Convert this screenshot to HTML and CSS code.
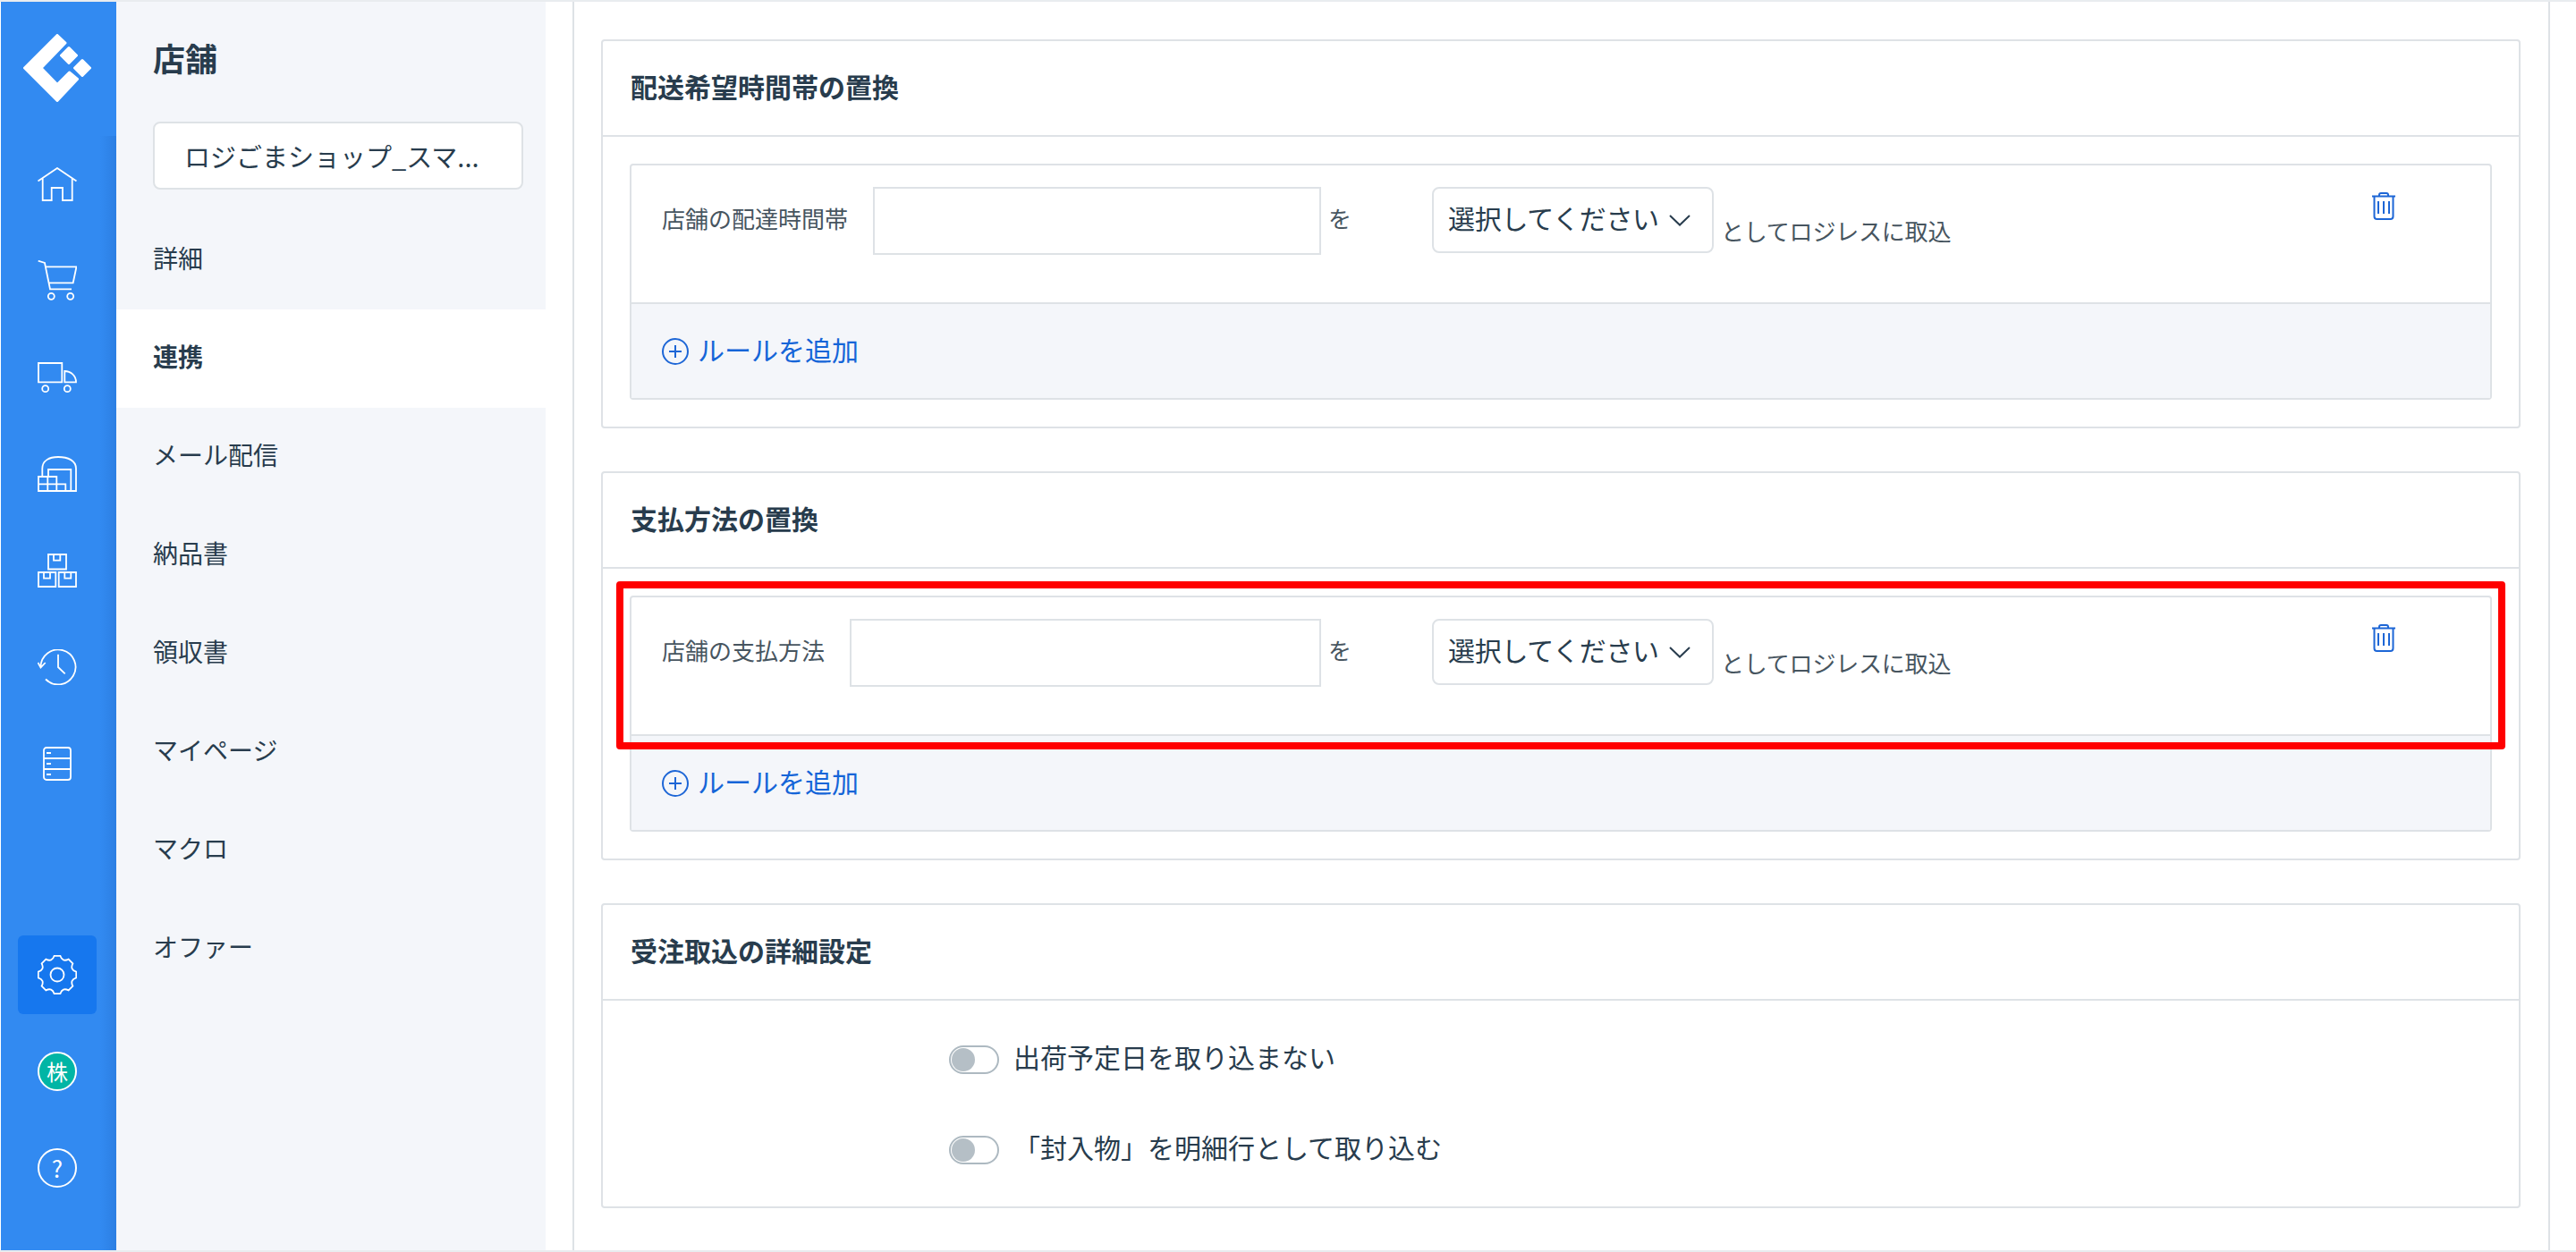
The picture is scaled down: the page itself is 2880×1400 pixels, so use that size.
FILE: index.html
```html
<!DOCTYPE html>
<html lang="ja">
<head>
<meta charset="utf-8">
<title>店舗 連携</title>
<link rel="stylesheet" href="styles.css">
</head>
<body>
<div class="app">
  <aside class="rail">
    <div class="rail-logo">
      <svg class="logo" width="76" height="76" viewBox="0 0 76 76"><path d="M38 1.500L47 10L20 38L38 56.500L51.500 43L60.500 50.500L38 74.500L1.500 38Z"/><path d="M51 15.500L59.500 24L51 32.500L42.500 24ZM66 29.500L74.500 38L66 46.500L57.500 38Z"/></svg>
    </div>
    <nav class="rail-nav">
      <a class="rail-item"><svg class="ico" width="44" height="38" viewBox="0 0 44 38"><path d="M.5 15.500L22 1L43.500 15.500M5.700 11.500V37H15.700V23H28V37H38.700V11.500"/></svg></a>
      <a class="rail-item"><svg class="ico" width="44" height="46" viewBox="0 0 44 46"><path d="M.7 .7L8 3L14 32.300H38M8.700 7.300H43.500L39.700 25.300H12.700"/><circle cx="15.300" cy="40.300" r="3.500"/><circle cx="36.700" cy="40.300" r="3.500"/></svg></a>
      <a class="rail-item"><svg class="ico" width="44" height="35" viewBox="0 0 44 35"><path d="M1 1H27.300V22.300H1ZM30.300 10C37 10 43 15 43 22.300H30.300Z"/><circle cx="8.700" cy="29.700" r="3.500"/><circle cx="33.300" cy="29.700" r="3.500"/></svg></a>
      <a class="rail-item"><svg class="ico" width="44" height="40" viewBox="0 0 44 40"><path d="M5.300 23V14C5.300 5 13 1 23 1C34 1 43 5 43 14V39H1V23H21.300V31.300H31.300V39M1 31.300H21.300V39M11.300 23V39M12 23V15H37.300V39"/></svg></a>
      <a class="rail-item"><svg class="ico" width="44" height="38" viewBox="0 0 44 38"><path d="M12 1H32V17.500H12ZM18 1V7.700H25.300V1M1 21H20.300V37H1ZM7 21V27.700H14V21M23.700 21H43V37H23.700ZM30.300 21V27.700H37.300V21"/></svg></a>
      <a class="rail-item"><svg class="ico" width="44" height="40" viewBox="0 0 44 40"><path d="M3.500 20A19.500 19.500 0 1 1 9 33.500M.5 15L3.500 20.500L8.700 15M23 5.700V20L30.700 27.300"/></svg></a>
      <a class="rail-item"><svg class="ico" width="32" height="38" viewBox="0 0 32 38"><rect x="1" y="1" width="30" height="36" rx="3"/><path d="M1 13H31M1 25H31M4 7H9M4 19H9M4 31H9"/></svg></a>
      <div class="rail-bottom">
        <a class="rail-item"><span class="rail-active"><svg class="ico" width="44" height="44" viewBox="0 0 44 44"><path d="M18.640 .76L25.360 .76Q27.740 8.140 34.640 4.610L39.390 9.360Q35.860 16.260 43.240 18.640L43.240 25.360Q35.860 27.740 39.390 34.640L34.640 39.390Q27.740 35.860 25.360 43.240L18.640 43.240Q16.260 35.860 9.360 39.390L4.610 34.640Q8.140 27.740 .76 25.360L.76 18.640Q8.140 16.260 4.610 9.360L9.360 4.610Q16.260 8.140 18.640 .76Z"/><circle cx="22" cy="22" r="7.500"/></svg></span></a>
        <a class="rail-item"><span class="avatar">株</span></a>
        <a class="rail-item"><span class="help">?</span></a>
      </div>
    </nav>
  </aside>

  <aside class="panel">
    <h1 class="panel-title">店舗</h1>
    <div class="store-select">ロジごまショップ_スマ...</div>
    <ul class="panel-nav">
      <li class="panel-item">詳細</li>
      <li class="panel-item panel-item-active">連携</li>
      <li class="panel-item">メール配信</li>
      <li class="panel-item">納品書</li>
      <li class="panel-item">領収書</li>
      <li class="panel-item">マイページ</li>
      <li class="panel-item">マクロ</li>
      <li class="panel-item">オファー</li>
    </ul>
  </aside>

  <main class="main">
    <div class="content">
      <section class="card">
        <h2 class="card-head">配送希望時間帯の置換</h2>
        <div class="card-body">
          <div class="rules">
            <div class="rule-row">
              <div class="rule-field"><label class="rule-label">店舗の配達時間帯</label><input class="rule-input" type="text"></div>
              <span class="rule-wo">を</span>
              <div class="pick">選択してください<svg class="pick-arrow" width="24" height="13" viewBox="0 0 24 13"><path d="M1 1L12 11.500L23 1"/></svg></div>
              <span class="rule-tail">としてロジレスに取込</span>
              <svg class="trash" width="26" height="31" viewBox="0 0 26 31"><path d="M0 4.500H26M8 4V3Q8 1 10 1H16Q18 1 18 3V4M2.500 5V27Q2.500 30 5.500 30H20.500Q23.500 30 23.500 27V5M7 10V24M13 10V24M19 10V24"/></svg>
            </div>
            <div class="rule-foot">
              <svg class="add-ico" width="30" height="30" viewBox="0 0 30 30"><circle cx="15" cy="15" r="14"/><path d="M15 8V22M8 15H22"/></svg>
              <span class="add-text">ルールを追加</span>
            </div>
          </div>
        </div>
      </section>

      <section class="card">
        <h2 class="card-head">支払方法の置換</h2>
        <div class="card-body">
          <div class="rules">
            <div class="rule-row">
              <div class="rule-field"><label class="rule-label">店舗の支払方法</label><input class="rule-input" type="text"></div>
              <span class="rule-wo">を</span>
              <div class="pick">選択してください<svg class="pick-arrow" width="24" height="13" viewBox="0 0 24 13"><path d="M1 1L12 11.500L23 1"/></svg></div>
              <span class="rule-tail">としてロジレスに取込</span>
              <svg class="trash" width="26" height="31" viewBox="0 0 26 31"><path d="M0 4.500H26M8 4V3Q8 1 10 1H16Q18 1 18 3V4M2.500 5V27Q2.500 30 5.500 30H20.500Q23.500 30 23.500 27V5M7 10V24M13 10V24M19 10V24"/></svg>
              <div class="highlight"></div>
            </div>
            <div class="rule-foot">
              <svg class="add-ico" width="30" height="30" viewBox="0 0 30 30"><circle cx="15" cy="15" r="14"/><path d="M15 8V22M8 15H22"/></svg>
              <span class="add-text">ルールを追加</span>
            </div>
          </div>
        </div>
      </section>

      <section class="card">
        <h2 class="card-head">受注取込の詳細設定</h2>
        <div class="toggles">
          <div class="toggle-row"><span class="toggle"><span class="knob"></span></span><span class="toggle-text">出荷予定日を取り込まない</span></div>
          <div class="toggle-row"><span class="toggle"><span class="knob"></span></span><span class="toggle-text">「封入物」を明細行として取り込む</span></div>
        </div>
      </section>
    </div>
  </main>
</div>
</body>
</html>
```

FILE: styles.css
```css
* { box-sizing: border-box; }
html, body { margin: 0; padding: 0; background: #fff; }
body {
  font-family: "Noto Sans CJK JP", "Noto Sans", "Liberation Sans", sans-serif;
  color: #283c4d;
  overflow: hidden;
}
h1, h2, ul { margin: 0; padding: 0; list-style: none; }

.app {
  display: flex;
  height: 1400px;
  padding-left: 1px;
  border-top: 2px solid #e9ecef;
  border-bottom: 2px solid #e9ecef;
}

/* blue icon rail */
.rail {
  flex: none;
  width: 129px;
  display: flex;
  flex-direction: column;
  background: #328af1;
}
.rail-logo {
  flex: none;
  height: 150px;
  display: flex;
  align-items: flex-start;
  justify-content: center;
  padding: 36px 3px 0 0;
}
.logo {
  display: block;
  fill: #fff;
  stroke: #fff;
  stroke-width: 3;
  stroke-linejoin: round;
}
.rail-nav {
  flex: 1;
  display: flex;
  flex-direction: column;
  background: linear-gradient(to right, rgba(44,127,227,0) 86%, #2c7fe3 100%);
}
.rail-item {
  flex: none;
  height: 108px;
  display: flex;
  align-items: center;
  justify-content: center;
  padding-right: 3px;
}
.rail-bottom {
  margin-top: auto;
  padding-bottom: 38px;
}
.ico { display: block; fill: none; stroke: #fff; stroke-width: 1.8; }
.rail-active {
  width: 88px;
  height: 88px;
  border-radius: 6px;
  background: #1677ee;
  display: flex;
  align-items: center;
  justify-content: center;
}
.avatar, .help {
  width: 44px;
  height: 44px;
  border-radius: 50%;
  border: 2px solid #fff;
  color: #fff;
  display: flex;
  align-items: center;
  justify-content: center;
  font-size: 24px;
  line-height: 1;
}
.avatar { background: #00b5a5; }
.help { font-size: 26px; }

/* secondary panel */
.panel {
  flex: none;
  width: 480px;
  background: #f4f6fa;
  padding-top: 37px;
}
.panel-title {
  margin-left: 41px;
  font-size: 36px;
  line-height: 50px;
  font-weight: 700;
}
.store-select {
  margin: 47px 0 0 41px;
  width: 414px;
  height: 76px;
  padding-left: 33px;
  display: flex;
  align-items: center;
  background: #fff;
  border: 2px solid #dee2e6;
  border-radius: 8px;
  font-size: 29px;
  white-space: nowrap;
}
.panel-nav { margin-top: 24px; }
.panel-item {
  height: 110px;
  padding: 0 0 6px 41px;
  display: flex;
  align-items: center;
  font-size: 28px;
}
.panel-item-active {
  background: #fff;
  font-weight: 700;
}

/* main */
.main {
  flex: 1;
  min-width: 0;
  padding: 0 29px 0 30px;
}
.content {
  height: 100%;
  border-left: 2px solid #dee2e6;
  border-right: 2px solid #dee2e6;
  padding: 42px 31px 0 30px;
  display: flex;
  flex-direction: column;
  gap: 48px;
}
.card {
  flex: none;
  border: 2px solid #dee2e6;
  border-radius: 4px;
  background: #fff;
}
.card-head {
  height: 107px;
  padding: 0 0 5px 31px;
  display: flex;
  align-items: center;
  border-bottom: 2px solid #dee2e6;
  font-size: 30px;
  font-weight: 700;
}
.card-body { padding: 30px; }
.rules {
  border: 2px solid #dee2e6;
  border-radius: 4px;
}
.rule-row {
  position: relative;
  height: 155px;
  padding: 24px 0 0 34px;
  display: flex;
  align-items: flex-start;
  border-bottom: 2px solid #dee2e6;
}
.rule-field {
  flex: none;
  width: 737px;
  display: flex;
  align-items: flex-start;
  gap: 28px;
}
.rule-label {
  flex: none;
  margin-top: 18px;
  font-size: 26px;
  line-height: 34px;
  color: #47555f;
}
.rule-input {
  flex: 1;
  min-width: 0;
  height: 76px;
  border: 2px solid #dee2e6;
  border-radius: 0;
  background: #fff;
  outline: none;
}
.rule-wo {
  flex: none;
  width: 124px;
  padding-left: 8px;
  margin-top: 18px;
  font-size: 26px;
  line-height: 34px;
  color: #47555f;
}
.pick {
  flex: none;
  width: 315px;
  height: 74px;
  padding: 0 0 6px 16px;
  display: flex;
  align-items: center;
  border: 2px solid #dee2e6;
  border-radius: 8px;
  background: #fff;
  font-size: 30px;
  letter-spacing: -0.3px;
  white-space: nowrap;
}
.pick-arrow {
  flex: none;
  margin: 6px 0 0 11px;
  fill: none;
  stroke: #283c4d;
  stroke-width: 2;
}
.rule-tail {
  flex: none;
  margin: 32px 0 0 8px;
  font-size: 26px;
  line-height: 34px;
  letter-spacing: -0.2px;
  color: #47555f;
  white-space: nowrap;
}
.trash {
  flex: none;
  margin: 6px 106px 0 auto;
  fill: none;
  stroke: #1d66d6;
  stroke-width: 2;
}
.highlight {
  position: absolute;
  top: -18px;
  left: -17px;
  right: -17px;
  bottom: -17px;
  border: 8px solid #ff0000;
  border-radius: 4px;
  pointer-events: none;
}
.rule-foot {
  height: 105px;
  padding-left: 34px;
  display: flex;
  align-items: center;
  gap: 10px;
  background: #f4f6fa;
}
.add-ico {
  flex: none;
  fill: none;
  stroke: #1d66d6;
  stroke-width: 2;
}
.add-text {
  padding-bottom: 6px;
  font-size: 30px;
  line-height: 40px;
  color: #1565d8;
}

/* toggles */
.toggles {
  height: 230px;
  padding: 50px 0 0 387px;
  display: flex;
  flex-direction: column;
  gap: 69px;
}
.toggle-row {
  display: flex;
  align-items: center;
  height: 32px;
  gap: 16px;
}
.toggle {
  flex: none;
  width: 56px;
  height: 32px;
  padding: 1px;
  border: 2px solid #adb9c1;
  border-radius: 16px;
  background: #fff;
}
.knob {
  display: block;
  width: 26px;
  height: 26px;
  border-radius: 50%;
  background: #b5bfc6;
}
.toggle-text {
  padding-bottom: 8px;
  font-size: 30px;
  line-height: 40px;
  white-space: nowrap;
}
```
